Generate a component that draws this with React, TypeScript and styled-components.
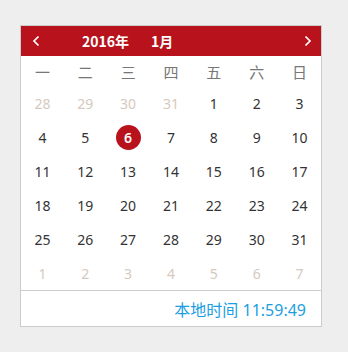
import { FC } from 'react';
import styled, { createGlobalStyle } from 'styled-components';

const GlobalStyle = createGlobalStyle`
  html, body {
    margin: 0;
    padding: 0;
    background: #eeeeee;
  }
  body {
    font-family: "Noto Sans", "Noto Sans CJK SC", sans-serif;
  }
`;

const RED = '#b8121c';

const Page = styled.div`
  padding: 25px 0 0 20px;
  height: 352px;
  box-sizing: border-box;
`;

const Calendar = styled.div`
  width: 302px;
  box-sizing: border-box;
  border: 1px solid #cccccc;
  background: #ffffff;
`;

const Header = styled.div`
  height: 30px;
  background: ${RED};
  display: flex;
  align-items: center;
  padding: 0 9px 0 11px;
  color: #ffffff;
`;

const ArrowButton = styled.button`
  border: 0;
  background: transparent;
  padding: 0;
  width: 8px;
  height: 12px;
  display: flex;
  align-items: center;
  justify-content: center;
  cursor: pointer;
  svg {
    display: block;
  }
`;

const Title = styled.div`
  flex: 1;
  display: flex;
  gap: 22px;
  padding-left: 42px;
  font-family: "Noto Sans CJK SC", sans-serif;
  font-size: 14px;
  font-weight: bold;
  line-height: 30px;
`;

const Grid = styled.div`
  display: grid;
  grid-template-columns: repeat(7, 1fr);
`;

const WeekDay = styled.div`
  height: 30px;
  display: flex;
  align-items: center;
  justify-content: center;
  font-family: "Noto Sans CJK SC", sans-serif;
  font-size: 15px;
  color: #777777;
`;

const DayCell = styled.div<{ $muted?: boolean; $active?: boolean }>`
  height: 34px;
  display: flex;
  align-items: center;
  justify-content: center;
  font-size: 14px;
  color: ${(p) => (p.$muted ? '#d6c9be' : '#333333')};
  span {
    width: 25px;
    height: 25px;
    border-radius: 50%;
    display: flex;
    align-items: center;
    justify-content: center;
    background: ${(p) => (p.$active ? RED : 'transparent')};
    color: ${(p) => (p.$active ? '#ffffff' : 'inherit')};
    font-weight: ${(p) => (p.$active ? 600 : 'normal')};
  }
`;

const Footer = styled.div`
  height: 35px;
  border-top: 1px solid #cccccc;
  display: flex;
  align-items: center;
  justify-content: flex-end;
  padding-right: 15px;
  font-family: "Noto Sans", "Noto Sans CJK SC", sans-serif;
  font-size: 16px;
  color: #1c9ee0;
`;

const Chevron: FC<{ dir: 'left' | 'right' }> = ({ dir }) => (
  <svg width="8" height="12" viewBox="0 0 8 12">
    <path
      d={dir === 'left' ? 'M6.5 1.5 L2 6 L6.5 10.5' : 'M1.5 1.5 L6 6 L1.5 10.5'}
      fill="none"
      stroke="#ffffff"
      strokeWidth="1.7"
    />
  </svg>
);

const weekDays = ['一', '二', '三', '四', '五', '六', '日'];

interface Day {
  n: number;
  muted?: boolean;
}

const days: Day[] = [
  ...[28, 29, 30, 31].map((n) => ({ n, muted: true })),
  ...Array.from({ length: 31 }, (_, i) => ({ n: i + 1 })),
  ...Array.from({ length: 7 }, (_, i) => ({ n: i + 1, muted: true })),
];

const App: FC = () => (
  <Page>
    <GlobalStyle />
    <Calendar>
      <Header>
        <ArrowButton aria-label="上一月">
          <Chevron dir="left" />
        </ArrowButton>
        <Title>
          <span>2016年</span>
          <span>1月</span>
        </Title>
        <ArrowButton aria-label="下一月">
          <Chevron dir="right" />
        </ArrowButton>
      </Header>
      <Grid>
        {weekDays.map((d) => (
          <WeekDay key={d}>{d}</WeekDay>
        ))}
        {days.map((d, i) => (
          <DayCell key={i} $muted={d.muted} $active={!d.muted && d.n === 6}>
            <span>{d.n}</span>
          </DayCell>
        ))}
      </Grid>
      <Footer>本地时间 11:59:49</Footer>
    </Calendar>
  </Page>
);

export default App;
